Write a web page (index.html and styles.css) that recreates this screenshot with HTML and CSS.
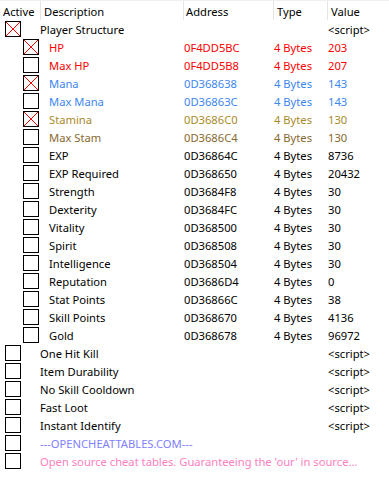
FILE: index.html
```html
<!DOCTYPE html>
<html>
<head>
<meta charset="utf-8">
<link rel="stylesheet" href="styles.css">
</head>
<body>
<div class="table">
  <div class="head">
    <div class="hc h-active">Active</div>
    <div class="hc h-desc">Description</div>
    <div class="hc h-addr">Address</div>
    <div class="hc h-type">Type</div>
    <div class="hc h-val">Value</div>
  </div>

  <div class="row">
    <div class="main"><span class="box on"><svg viewBox="0 0 14 14"><path d="M0 0L14 14M14 0L0 14"/></svg></span><span class="desc">Player Structure</span></div>
    <div class="addr"></div><div class="type"></div><div class="val">&lt;script&gt;</div>
  </div>

  <div class="row child red">
    <div class="main"><span class="box on"><svg viewBox="0 0 14 14"><path d="M0 0L14 14M14 0L0 14"/></svg></span><span class="desc">HP</span></div>
    <div class="addr">0F4DD5BC</div><div class="type">4 Bytes</div><div class="val">203</div>
  </div>
  <div class="row child red">
    <div class="main"><span class="box"></span><span class="desc">Max HP</span></div>
    <div class="addr">0F4DD5B8</div><div class="type">4 Bytes</div><div class="val">207</div>
  </div>
  <div class="row child blue">
    <div class="main"><span class="box on"><svg viewBox="0 0 14 14"><path d="M0 0L14 14M14 0L0 14"/></svg></span><span class="desc">Mana</span></div>
    <div class="addr">0D368638</div><div class="type">4 Bytes</div><div class="val">143</div>
  </div>
  <div class="row child blue">
    <div class="main"><span class="box"></span><span class="desc">Max Mana</span></div>
    <div class="addr">0D36863C</div><div class="type">4 Bytes</div><div class="val">143</div>
  </div>
  <div class="row child gold">
    <div class="main"><span class="box on"><svg viewBox="0 0 14 14"><path d="M0 0L14 14M14 0L0 14"/></svg></span><span class="desc">Stamina</span></div>
    <div class="addr">0D3686C0</div><div class="type">4 Bytes</div><div class="val">130</div>
  </div>
  <div class="row child brown">
    <div class="main"><span class="box"></span><span class="desc">Max Stam</span></div>
    <div class="addr">0D3686C4</div><div class="type">4 Bytes</div><div class="val">130</div>
  </div>
  <div class="row child">
    <div class="main"><span class="box"></span><span class="desc">EXP</span></div>
    <div class="addr">0D36864C</div><div class="type">4 Bytes</div><div class="val">8736</div>
  </div>
  <div class="row child">
    <div class="main"><span class="box"></span><span class="desc">EXP Required</span></div>
    <div class="addr">0D368650</div><div class="type">4 Bytes</div><div class="val">20432</div>
  </div>
  <div class="row child">
    <div class="main"><span class="box"></span><span class="desc">Strength</span></div>
    <div class="addr">0D3684F8</div><div class="type">4 Bytes</div><div class="val">30</div>
  </div>
  <div class="row child">
    <div class="main"><span class="box"></span><span class="desc">Dexterity</span></div>
    <div class="addr">0D3684FC</div><div class="type">4 Bytes</div><div class="val">30</div>
  </div>
  <div class="row child">
    <div class="main"><span class="box"></span><span class="desc">Vitality</span></div>
    <div class="addr">0D368500</div><div class="type">4 Bytes</div><div class="val">30</div>
  </div>
  <div class="row child">
    <div class="main"><span class="box"></span><span class="desc">Spirit</span></div>
    <div class="addr">0D368508</div><div class="type">4 Bytes</div><div class="val">30</div>
  </div>
  <div class="row child">
    <div class="main"><span class="box"></span><span class="desc">Intelligence</span></div>
    <div class="addr">0D368504</div><div class="type">4 Bytes</div><div class="val">30</div>
  </div>
  <div class="row child">
    <div class="main"><span class="box"></span><span class="desc">Reputation</span></div>
    <div class="addr">0D3686D4</div><div class="type">4 Bytes</div><div class="val">0</div>
  </div>
  <div class="row child">
    <div class="main"><span class="box"></span><span class="desc">Stat Points</span></div>
    <div class="addr">0D36866C</div><div class="type">4 Bytes</div><div class="val">38</div>
  </div>
  <div class="row child">
    <div class="main"><span class="box"></span><span class="desc">Skill Points</span></div>
    <div class="addr">0D368670</div><div class="type">4 Bytes</div><div class="val">4136</div>
  </div>
  <div class="row child">
    <div class="main"><span class="box"></span><span class="desc">Gold</span></div>
    <div class="addr">0D368678</div><div class="type">4 Bytes</div><div class="val">96972</div>
  </div>

  <div class="row">
    <div class="main"><span class="box"></span><span class="desc">One Hit Kill</span></div>
    <div class="addr"></div><div class="type"></div><div class="val">&lt;script&gt;</div>
  </div>
  <div class="row">
    <div class="main"><span class="box"></span><span class="desc">Item Durability</span></div>
    <div class="addr"></div><div class="type"></div><div class="val">&lt;script&gt;</div>
  </div>
  <div class="row">
    <div class="main"><span class="box"></span><span class="desc">No Skill Cooldown</span></div>
    <div class="addr"></div><div class="type"></div><div class="val">&lt;script&gt;</div>
  </div>
  <div class="row">
    <div class="main"><span class="box"></span><span class="desc">Fast Loot</span></div>
    <div class="addr"></div><div class="type"></div><div class="val">&lt;script&gt;</div>
  </div>
  <div class="row">
    <div class="main"><span class="box"></span><span class="desc">Instant Identify</span></div>
    <div class="addr"></div><div class="type"></div><div class="val">&lt;script&gt;</div>
  </div>
  <div class="row violet">
    <div class="main wide"><span class="box"></span><span class="desc">---OPENCHEATTABLES.COM---</span></div>
  </div>
  <div class="row pink">
    <div class="main wide"><span class="box"></span><span class="desc">Open source cheat tables. Guaranteeing the 'our' in source...</span></div>
  </div>
</div>
</body>
</html>
```

FILE: styles.css
```css
html, body {
  margin: 0;
  padding: 0;
  background: #ffffff;
}
body {
  font-family: "Noto Sans", "Segoe UI", sans-serif;
  font-size: 11.2px;
  color: #000000;
  width: 389px;
  height: 479px;
  overflow: hidden;
}
.head {
  display: flex;
  height: 20px;
  align-items: stretch;
  border-top: 1px solid #f0f0f0;
  box-sizing: border-box;
}
.hc {
  box-sizing: border-box;
  border-right: 1px solid #e5e5e5;
  padding-left: 3px;
  line-height: 21px;
  white-space: nowrap;
  overflow: hidden;
}
.h-active { width: 41px; }
.h-desc { width: 143px; }
.h-addr { width: 90px; padding-left: 2px; }
.h-type { width: 54px; }
.h-val { flex: 1; border-right: none; }

.row {
  display: flex;
  align-items: center;
  height: 18px;
  white-space: nowrap;
}
.main {
  width: 184px;
  display: flex;
  align-items: center;
  overflow: hidden;
}
.main.wide {
  width: auto;
  flex: 1;
}
.box {
  box-sizing: border-box;
  width: 16px;
  height: 16px;
  border: 1px solid #000000;
  margin-left: 5px;
  margin-right: 19px;
  flex: none;
  display: flex;
}
.child .box {
  margin-left: 23px;
  margin-right: 10px;
}
.box svg {
  width: 14px;
  height: 14px;
}
.box svg path {
  stroke: #ff0000;
  stroke-width: 1;
  fill: none;
}
.addr { width: 90px; }
.type { width: 54px; }
.val { flex: 1; }

.red { color: #ff0000; }
.blue { color: #3c86f2; }
.gold { color: #a88a2a; }
.brown { color: #86682e; }
.violet { color: #8080ff; }
.pink { color: #ff80c0; }
```
